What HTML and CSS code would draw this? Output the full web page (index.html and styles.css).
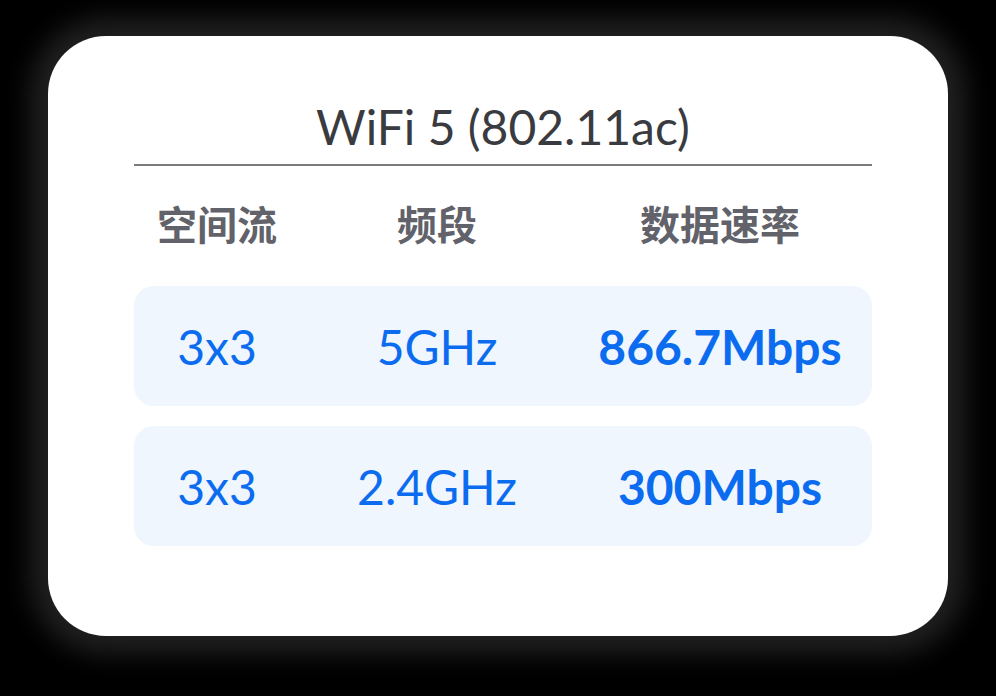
FILE: index.html
```html
<!DOCTYPE html>
<html lang="zh-CN">
<head>
<meta charset="utf-8">
<title>WiFi 5</title>
<link rel="stylesheet" href="styles.css">
</head>
<body>
<div class="card">
  <h1 class="title">WiFi 5 (802.11ac)</h1>
  <div class="grid head">
    <div>空间流</div>
    <div>频段</div>
    <div>数据速率</div>
  </div>
  <div class="grid row">
    <div>3x3</div>
    <div>5GHz</div>
    <div class="rate">866.7Mbps</div>
  </div>
  <div class="grid row">
    <div>3x3</div>
    <div>2.4GHz</div>
    <div class="rate">300Mbps</div>
  </div>
</div>
</body>
</html>
```
FILE: styles.css
```css
html, body {
  margin: 0;
  padding: 0;
  background: #000;
  width: 996px;
  height: 696px;
  overflow: hidden;
}
body {
  font-family: Lato, "Noto Sans CJK SC", sans-serif;
  padding-top: 36px;
  box-sizing: border-box;
}
.card {
  margin-left: 48px;
  width: 900px;
  height: 600px;
  box-sizing: border-box;
  background: #fff;
  border-radius: 58px;
  padding: 63px 76px 0 86px;
  box-shadow: 0 0 26px 18px rgba(100, 100, 100, 0.32);
  display: flex;
  flex-direction: column;
}
.title {
  margin: 0;
  font-weight: 400;
  font-size: 48px;
  line-height: 56px;
  color: #3a3b40;
  text-align: center;
  padding-bottom: 9px;
  border-bottom: 2px solid #7b7b7e;
}
.grid {
  display: grid;
  grid-template-columns: 166px 274px 292px;
  align-items: center;
  justify-items: center;
}
.head {
  height: 120px;
  padding-bottom: 6px;
  box-sizing: border-box;
  font-family: "Noto Sans CJK SC", sans-serif;
  font-weight: 700;
  font-size: 40px;
  color: #61626a;
}
.row {
  height: 120px;
  background: #eff6fe;
  border-radius: 20px;
  font-size: 48px;
  color: #0b6cf0;
  margin-bottom: 20px;
}
.rate {
  font-weight: 700;
}
```
